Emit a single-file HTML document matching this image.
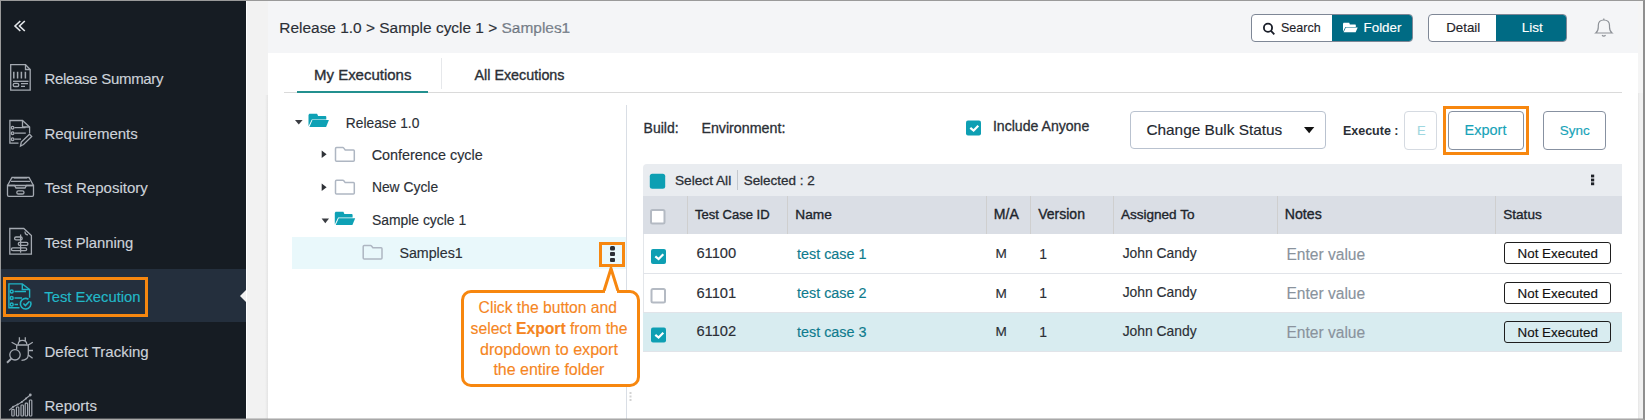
<!DOCTYPE html><html><head><meta charset="utf-8"><style>*{box-sizing:border-box;margin:0;padding:0}html,body{width:1645px;height:420px;overflow:hidden;background:#fff;font-family:"Liberation Sans", sans-serif}.t{position:absolute;white-space:nowrap}.r{position:absolute}svg{position:absolute;left:0;top:0}</style></head><body>
<div class="r" style="left:0px;top:0px;width:1645px;height:420px;background:#f2f2f2;"></div>
<div class="r" style="left:268px;top:0px;width:1370px;height:53px;background:#f4f5f7;"></div>
<div class="r" style="left:0px;top:0px;width:246px;height:420px;background:#161c23;"></div>
<div class="r" style="left:246px;top:0px;width:1px;height:420px;background:#ffffff;"></div>
<div class="r" style="left:268px;top:53px;width:1370px;height:367px;background:#ffffff;"></div>
<div class="r" style="left:265px;top:95px;width:3px;height:325px;background:linear-gradient(to right,#f2f2f2,#e4e4e4);"></div>
<div class="r" style="left:1638px;top:0px;width:6px;height:93px;background:#f5f5f5;"></div>
<div class="r" style="left:1638px;top:93px;width:6px;height:327px;background:linear-gradient(to right,#e6e6e6,#f1f1f1 2px,#f1f1f1);"></div>
<div class="r" style="left:0px;top:269px;width:246px;height:53px;background:#242f3d;"></div>
<div class="t" style="left:44.4px;top:71.20px;font-size:15px;line-height:15px;color:#cdd2d9;-webkit-text-stroke:0.15px #cdd2d9;letter-spacing:-0.3px;">Release Summary</div>
<div class="t" style="left:44.4px;top:126.40px;font-size:15px;line-height:15px;color:#cdd2d9;-webkit-text-stroke:0.15px #cdd2d9;">Requirements</div>
<div class="t" style="left:44.4px;top:180.40px;font-size:15px;line-height:15px;color:#cdd2d9;-webkit-text-stroke:0.15px #cdd2d9;">Test Repository</div>
<div class="t" style="left:44.4px;top:235.57px;font-size:14.8px;line-height:14.8px;color:#cdd2d9;-webkit-text-stroke:0.15px #cdd2d9;">Test Planning</div>
<div class="t" style="left:44.3px;top:290.47px;font-size:14.8px;line-height:14.8px;color:#22b8c8;-webkit-text-stroke:0.15px #22b8c8;">Test Execution</div>
<div class="t" style="left:44.5px;top:343.90px;font-size:15px;line-height:15px;color:#cdd2d9;-webkit-text-stroke:0.15px #cdd2d9;">Defect Tracking</div>
<div class="t" style="left:44.5px;top:397.70px;font-size:15px;line-height:15px;color:#cdd2d9;-webkit-text-stroke:0.15px #cdd2d9;">Reports</div>
<div class="r" style="left:3px;top:277px;width:145px;height:40px;background:transparent;border:3px solid #f7870f"></div>
<div class="r" style="left:240px;top:290px;width:0;height:0;border-top:6px solid transparent;border-bottom:6px solid transparent;border-right:6px solid #f2f2f2"></div>
<div class="t" style="left:279.3px;top:20.23px;font-size:15.44px;line-height:15.44px;color:#2b2f36;-webkit-text-stroke:0.15px #2b2f36;">Release 1.0 &gt; Sample cycle 1 &gt; <span style="color:#7f8893">Samples1</span></div>
<div class="r" style="left:1251px;top:14px;width:162px;height:28px;border:1px solid #7e8796;border-radius:4px;background:#fff;overflow:hidden"><div class="r" style="left:80px;top:-1px;width:82px;height:28px;background:#006b84"></div></div>
<div class="t" style="left:1281.0px;top:22.29px;font-size:12.53px;line-height:12.53px;color:#1f232a;-webkit-text-stroke:0.15px #1f232a;">Search</div>
<div class="t" style="left:1363.6px;top:21.11px;font-size:13.34px;line-height:13.34px;color:#ffffff;-webkit-text-stroke:0.15px #ffffff;">Folder</div>
<div class="r" style="left:1428px;top:14px;width:139px;height:28px;border:1px solid #7e8796;border-radius:4px;background:#fff;overflow:hidden"><div class="r" style="left:67px;top:-1px;width:72px;height:28px;background:#006b84"></div></div>
<div class="t" style="left:1446.2px;top:20.64px;font-size:13.3px;line-height:13.3px;color:#1f232a;-webkit-text-stroke:0.15px #1f232a;">Detail</div>
<div class="t" style="left:1521.8px;top:21.37px;font-size:13.5px;line-height:13.5px;color:#ffffff;-webkit-text-stroke:0.15px #ffffff;">List</div>
<div class="t" style="left:314.0px;top:67.21px;font-size:14.99px;line-height:14.99px;color:#2b2f36;-webkit-text-stroke:0.35px #2b2f36;">My Executions</div>
<div class="t" style="left:474.5px;top:67.77px;font-size:14.33px;line-height:14.33px;color:#2b2f36;-webkit-text-stroke:0.35px #2b2f36;">All Executions</div>
<div class="r" style="left:441px;top:58px;width:1px;height:31px;background:#e6e8eb;"></div>
<div class="r" style="left:284px;top:92px;width:1338px;height:1px;background:#dadada;"></div>
<div class="r" style="left:297px;top:91px;width:131px;height:2px;background:#23908f;"></div>
<div class="t" style="left:345.8px;top:116.53px;font-size:13.79px;line-height:13.79px;color:#2b2f36;-webkit-text-stroke:0.15px #2b2f36;">Release 1.0</div>
<div class="t" style="left:371.7px;top:147.83px;font-size:14.38px;line-height:14.38px;color:#2b2f36;-webkit-text-stroke:0.15px #2b2f36;">Conference cycle</div>
<div class="t" style="left:371.9px;top:181.46px;font-size:13.87px;line-height:13.87px;color:#2b2f36;-webkit-text-stroke:0.15px #2b2f36;">New Cycle</div>
<div class="t" style="left:371.9px;top:213.92px;font-size:13.92px;line-height:13.92px;color:#2b2f36;-webkit-text-stroke:0.15px #2b2f36;">Sample cycle 1</div>
<div class="r" style="left:292px;top:237px;width:334px;height:32px;background:#e9f8fb;"></div>
<div class="t" style="left:399.4px;top:245.95px;font-size:14.24px;line-height:14.24px;color:#2b2f36;-webkit-text-stroke:0.15px #2b2f36;">Samples1</div>
<div class="r" style="left:599px;top:242px;width:26px;height:25px;background:transparent;border:3px solid #f7870f"></div>
<div class="r" style="left:626px;top:105px;width:1px;height:315px;background:#d9dee5;"></div>
<div class="t" style="left:643.6px;top:121.06px;font-size:13.99px;line-height:13.99px;color:#2b2f36;-webkit-text-stroke:0.3px #2b2f36;">Build:</div>
<div class="t" style="left:701.4px;top:120.83px;font-size:14.26px;line-height:14.26px;color:#2b2f36;-webkit-text-stroke:0.3px #2b2f36;">Environment:</div>
<div class="t" style="left:992.9px;top:118.76px;font-size:14.1px;line-height:14.1px;color:#2b2f36;-webkit-text-stroke:0.3px #2b2f36;">Include Anyone</div>
<div class="r" style="left:1130px;top:111px;width:196px;height:38px;border:1px solid #b9c2cf;border-radius:4px;background:#fff"></div>
<div class="t" style="left:1146.4px;top:122.37px;font-size:15.39px;line-height:15.39px;color:#24282f;-webkit-text-stroke:0.15px #24282f;">Change Bulk Status</div>
<div class="t" style="left:1342.9px;top:124.79px;font-size:12.53px;line-height:12.53px;color:#2b2f36;font-weight:bold;">Execute :</div>
<div class="r" style="left:1404px;top:111px;width:33px;height:39px;border:1px solid #d5dae1;border-radius:4px;background:#fff"></div>
<div class="t" style="left:1417.0px;top:124.40px;font-size:13px;line-height:13px;color:#9fd7e0;-webkit-text-stroke:0.15px #9fd7e0;">E</div>
<div class="r" style="left:1448px;top:111px;width:76px;height:39px;border:1px solid #8791a1;border-radius:4px;background:#fff"></div>
<div class="t" style="left:1464.5px;top:123.10px;font-size:14.53px;line-height:14.53px;color:#17a3b8;-webkit-text-stroke:0.15px #17a3b8;">Export</div>
<div class="r" style="left:1443px;top:106px;width:86px;height:49px;background:transparent;border:3px solid #f7870f"></div>
<div class="r" style="left:1543px;top:111px;width:63px;height:39px;border:1px solid #8791a1;border-radius:4px;background:#fff"></div>
<div class="t" style="left:1559.7px;top:123.98px;font-size:13.49px;line-height:13.49px;color:#17a3b8;-webkit-text-stroke:0.15px #17a3b8;">Sync</div>
<div class="r" style="left:643px;top:164px;width:979px;height:32px;background:#e9ecf0;border-radius:4px 0 0 0"></div>
<div class="t" style="left:674.9px;top:173.81px;font-size:13.69px;line-height:13.69px;color:#2b2f36;-webkit-text-stroke:0.3px #2b2f36;">Select All</div>
<div class="r" style="left:737px;top:170px;width:1px;height:20px;background:#c4c8ce;"></div>
<div class="t" style="left:743.7px;top:174.02px;font-size:13.44px;line-height:13.44px;color:#2b2f36;-webkit-text-stroke:0.3px #2b2f36;">Selected : 2</div>
<div class="r" style="left:643px;top:196px;width:979px;height:38px;background:#dadee5;"></div>
<div class="r" style="left:687px;top:196px;width:1px;height:38px;background:#cfcfcf;"></div>
<div class="r" style="left:787px;top:196px;width:1px;height:38px;background:#cfcfcf;"></div>
<div class="r" style="left:986px;top:196px;width:1px;height:38px;background:#cfcfcf;"></div>
<div class="r" style="left:1030px;top:196px;width:1px;height:38px;background:#cfcfcf;"></div>
<div class="r" style="left:1113px;top:196px;width:1px;height:38px;background:#cfcfcf;"></div>
<div class="r" style="left:1277px;top:196px;width:1px;height:38px;background:#cfcfcf;"></div>
<div class="r" style="left:1495px;top:196px;width:1px;height:38px;background:#cfcfcf;"></div>
<div class="t" style="left:695.1px;top:208.28px;font-size:13.02px;line-height:13.02px;color:#20252c;-webkit-text-stroke:0.35px #20252c;">Test Case ID</div>
<div class="t" style="left:795.3px;top:207.72px;font-size:13.68px;line-height:13.68px;color:#20252c;-webkit-text-stroke:0.35px #20252c;">Name</div>
<div class="t" style="left:993.8px;top:207.40px;font-size:14.06px;line-height:14.06px;color:#20252c;-webkit-text-stroke:0.35px #20252c;">M/A</div>
<div class="t" style="left:1038.2px;top:207.42px;font-size:14.03px;line-height:14.03px;color:#20252c;-webkit-text-stroke:0.35px #20252c;">Version</div>
<div class="t" style="left:1120.9px;top:207.82px;font-size:13.56px;line-height:13.56px;color:#20252c;-webkit-text-stroke:0.35px #20252c;">Assigned To</div>
<div class="t" style="left:1284.8px;top:207.34px;font-size:14.13px;line-height:14.13px;color:#20252c;-webkit-text-stroke:0.35px #20252c;">Notes</div>
<div class="t" style="left:1503.2px;top:207.77px;font-size:13.62px;line-height:13.62px;color:#20252c;-webkit-text-stroke:0.35px #20252c;">Status</div>
<div class="r" style="left:643px;top:234px;width:1px;height:118px;background:#e3e6ea;"></div>
<div class="r" style="left:643px;top:273px;width:979px;height:1px;background:#e1e4e9;"></div>
<div class="r" style="left:643px;top:312px;width:979px;height:40px;background:#d8ecf0;border-top:1px solid #e1e4e9;border-bottom:1px solid #e1e4e9"></div>
<div class="t" style="left:696.4px;top:246.35px;font-size:14.71px;line-height:14.71px;color:#2b2f36;-webkit-text-stroke:0.15px #2b2f36;">61100</div>
<div class="t" style="left:797.0px;top:246.62px;font-size:14.39px;line-height:14.39px;color:#0e7b8d;-webkit-text-stroke:0.15px #0e7b8d;">test case 1</div>
<div class="t" style="left:995.5px;top:247.29px;font-size:13.6px;line-height:13.6px;color:#2b2f36;-webkit-text-stroke:0.15px #2b2f36;">M</div>
<div class="t" style="left:1039.2px;top:246.95px;font-size:14px;line-height:14px;color:#2b2f36;-webkit-text-stroke:0.15px #2b2f36;">1</div>
<div class="t" style="left:1122.7px;top:247.06px;font-size:13.87px;line-height:13.87px;color:#2b2f36;-webkit-text-stroke:0.15px #2b2f36;">John Candy</div>
<div class="t" style="left:1286.4px;top:246.91px;font-size:15.58px;line-height:15.58px;color:#8a939d;-webkit-text-stroke:0.15px #8a939d;">Enter value</div>
<div class="r" style="left:1504px;top:242px;width:107px;height:22px;border:1.5px solid #1e1e1e;border-radius:3px;background:transparent"></div>
<div class="t" style="left:1517.6px;top:247.47px;font-size:13.39px;line-height:13.39px;color:#111;-webkit-text-stroke:0.15px #111;">Not Executed</div>
<div class="t" style="left:696.4px;top:285.65px;font-size:14.71px;line-height:14.71px;color:#2b2f36;-webkit-text-stroke:0.15px #2b2f36;">61101</div>
<div class="t" style="left:797.0px;top:285.92px;font-size:14.39px;line-height:14.39px;color:#0e7b8d;-webkit-text-stroke:0.15px #0e7b8d;">test case 2</div>
<div class="t" style="left:995.5px;top:286.59px;font-size:13.6px;line-height:13.6px;color:#2b2f36;-webkit-text-stroke:0.15px #2b2f36;">M</div>
<div class="t" style="left:1039.2px;top:286.25px;font-size:14px;line-height:14px;color:#2b2f36;-webkit-text-stroke:0.15px #2b2f36;">1</div>
<div class="t" style="left:1122.7px;top:286.36px;font-size:13.87px;line-height:13.87px;color:#2b2f36;-webkit-text-stroke:0.15px #2b2f36;">John Candy</div>
<div class="t" style="left:1286.4px;top:286.21px;font-size:15.58px;line-height:15.58px;color:#8a939d;-webkit-text-stroke:0.15px #8a939d;">Enter value</div>
<div class="r" style="left:1504px;top:282px;width:107px;height:22px;border:1.5px solid #1e1e1e;border-radius:3px;background:transparent"></div>
<div class="t" style="left:1517.6px;top:286.77px;font-size:13.39px;line-height:13.39px;color:#111;-webkit-text-stroke:0.15px #111;">Not Executed</div>
<div class="t" style="left:696.4px;top:324.45px;font-size:14.71px;line-height:14.71px;color:#2b2f36;-webkit-text-stroke:0.15px #2b2f36;">61102</div>
<div class="t" style="left:797.0px;top:324.72px;font-size:14.39px;line-height:14.39px;color:#0e7b8d;-webkit-text-stroke:0.15px #0e7b8d;">test case 3</div>
<div class="t" style="left:995.5px;top:325.39px;font-size:13.6px;line-height:13.6px;color:#2b2f36;-webkit-text-stroke:0.15px #2b2f36;">M</div>
<div class="t" style="left:1039.2px;top:325.05px;font-size:14px;line-height:14px;color:#2b2f36;-webkit-text-stroke:0.15px #2b2f36;">1</div>
<div class="t" style="left:1122.7px;top:325.16px;font-size:13.87px;line-height:13.87px;color:#2b2f36;-webkit-text-stroke:0.15px #2b2f36;">John Candy</div>
<div class="t" style="left:1286.4px;top:325.01px;font-size:15.58px;line-height:15.58px;color:#8a939d;-webkit-text-stroke:0.15px #8a939d;">Enter value</div>
<div class="r" style="left:1504px;top:321px;width:107px;height:22px;border:1.5px solid #1e1e1e;border-radius:3px;background:transparent"></div>
<div class="t" style="left:1517.6px;top:325.57px;font-size:13.39px;line-height:13.39px;color:#111;-webkit-text-stroke:0.15px #111;">Not Executed</div>
<div class="r" style="left:461px;top:290px;width:179px;height:97px;border:3px solid #f7870f;border-radius:10px;background:#fff"></div>
<div class="t" style="left:478.6px;top:299.64px;font-size:15.67px;line-height:15.67px;color:#f5861f;-webkit-text-stroke:0.15px #f5861f;">Click the button and</div>
<div class="t" style="left:470.6px;top:321.01px;font-size:15.7px;line-height:15.7px;color:#f5861f;-webkit-text-stroke:0.15px #f5861f;">select <b>Export</b> from the</div>
<div class="t" style="left:480.0px;top:341.25px;font-size:16.12px;line-height:16.12px;color:#f5861f;-webkit-text-stroke:0.15px #f5861f;">dropdown to export</div>
<div class="t" style="left:493.4px;top:362.17px;font-size:15.98px;line-height:15.98px;color:#f5861f;-webkit-text-stroke:0.15px #f5861f;">the entire folder</div>
<svg width="1645" height="420" viewBox="0 0 1645 420"><path d="M20.3 21 L15 26 L20.3 31 M24.8 21 L19.5 26 L24.8 31" fill="none" stroke="#e4e7eb" stroke-width="1.6"/><g fill="none" stroke="#a4a9b1" stroke-width="1.3"><path d="M10.7 64.7 H25.5 L30.2 69.5 V90.2 H10.7 Z"/><path d="M25.5 64.7 V69.5 H30.2"/><path d="M13.8 71.8 V78.4 M17.6 71.8 V78.4 M21.4 71.8 V78.4 M25.4 71.8 V78.4" stroke-width="1.5"/><path d="M13 81.3 H28.5"/><rect x="13.2" y="83.3" width="5.6" height="3.2" rx="1.6"/><path d="M21 83.6 H28 M21 86.3 H25"/></g><g fill="none" stroke="#a4a9b1" stroke-width="1.3"><path d="M29.6 133.3 V127 L22.5 120.5 H9.9 V143.2 H18.5"/><path d="M22.5 120.5 V127 H29.6"/><circle cx="12.6" cy="127.7" r="1.3"/><circle cx="12.6" cy="133.2" r="1.3"/><circle cx="12.6" cy="139.2" r="1.3"/><path d="M14.5 127.7 H25.5 M14.5 133.2 H25.8 M14.5 139.2 H21"/><path d="M20.5 146 L21.3 142 L29.5 134.2 L31.7 136.4 L23.5 144.5 Z"/></g><g fill="none" stroke="#a4a9b1" stroke-width="1.3"><path d="M7.5 185.5 V195 Q7.5 196.3 8.8 196.3 H32.2 Q33.5 196.3 33.5 195 V185.5 Z"/><path d="M7.5 185.5 L12 177.5 H29 L33.5 185.5"/><path d="M11 181.3 H30 M14 177.8 H27"/><path d="M7.5 185.5 H14.5 L16 188 H25 L26.5 185.5 H33.5"/><rect x="16.8" y="190.8" width="7.2" height="3.2" rx="1.6"/></g><g fill="none" stroke="#a4a9b1" stroke-width="1.3"><path d="M9.8 228.5 H23.8 L31.4 235.5 V254.2 H9.8 Z"/><path d="M25 231.5 Q25 234.8 28 234.8"/><path d="M20.6 234.5 V252.7"/><rect x="14.6" y="237" width="7.6" height="2.9" rx="1.4"/><rect x="18.3" y="242.4" width="9.6" height="2.9" rx="1.4"/><rect x="11.4" y="247.8" width="15.3" height="2.9" rx="1.4"/></g><g fill="none" stroke="#1fb4c4" stroke-width="1.4"><path d="M29.6 297.8 V289.5 L22.3 283.9 H8.9 V307.8 H19.5"/><path d="M22.3 283.9 V289.5 H29.6"/><circle cx="11.7" cy="291.5" r="1.5"/><circle cx="11.7" cy="298" r="1.5"/><circle cx="11.7" cy="304.5" r="1.5"/><path d="M14.5 291.5 H26 M14.5 298 H22 M14.5 304.5 H18"/><path d="M30.5 301.5 A5.3 5.3 0 1 1 28.5 299.2" stroke-width="1.6"/><path d="M23.4 303.5 L25.4 305.5 L29.5 301.2" stroke-width="1.6"/></g><g fill="none" stroke="#a4a9b1" stroke-width="1.3"><path d="M19.4 337.3 V341 M25.3 337.3 V341"/><path d="M18.2 344.5 Q18.2 340.3 22.4 340.3 Q26.8 340.3 26.8 344.5"/><path d="M16.7 345 H28.3 V354.5 Q28.3 360.2 21.5 360.4"/><path d="M16.7 345 V349.5"/><path d="M11.6 342.3 L16.7 345 M28.3 345 L32.8 342.3 M28.3 350.5 H33 M28.3 355 L32.6 358.3"/><circle cx="15" cy="354.8" r="5.2"/><path d="M11.3 358.6 L7 362.8" stroke-width="2"/></g><g fill="none" stroke="#a4a9b1" stroke-width="1.2"><rect x="11.8" y="409.3" width="2.4" height="6.7" rx="0.8"/><rect x="16.4" y="407" width="2.4" height="9" rx="0.8"/><rect x="21" y="405" width="2.4" height="11" rx="0.8"/><rect x="25.2" y="403.1" width="2.4" height="12.9" rx="0.8"/><rect x="29.4" y="400" width="2.4" height="16" rx="0.8"/><path d="M9 410.3 L13.2 406.8 L17.6 404.6 L21.8 402 L26 398.5 L30.3 395" stroke-width="1.1"/></g><g fill="#a4a9b1"><circle cx="13.2" cy="406.8" r="1"/><circle cx="17.6" cy="404.6" r="1"/><circle cx="21.8" cy="402" r="1"/><circle cx="26" cy="398.5" r="1"/><circle cx="30.3" cy="395" r="1.4"/></g><g fill="none" stroke="#191d28" stroke-width="1.8"><circle cx="1268" cy="27.8" r="4.1"/><path d="M1271 30.9 L1274.3 34.3"/></g><path d="M1343.00 23.66 L1343.58 22.80 L1349.19 22.80 L1349.91 24.46 L1355.38 24.46 L1355.82 24.96 L1355.82 26.90 L1345.38 26.90 L1343.00 31.87 Z" fill="#ffffff"/><path d="M1345.81 27.41 L1357.69 27.41 L1355.67 32.30 L1343.65 32.30 Z" fill="#ffffff"/><path d="M295 120 H302.6 L298.8 124.6 Z" fill="#3a3d42"/><path d="M321.7 150.6 L326.6 154.3 L321.7 158 Z" fill="#2f3237"/><path d="M321.7 183.6 L326.6 187.3 L321.7 191 Z" fill="#2f3237"/><path d="M321.6 218.6 H329 L325.3 223.3 Z" fill="#3a3d42"/><path d="M308.50 114.90 L309.30 113.70 L317.10 113.70 L318.10 116.00 L325.70 116.00 L326.30 116.70 L326.30 119.40 L311.80 119.40 L308.50 126.30 Z" fill="#0ea1b5"/><path d="M312.40 120.10 L328.90 120.10 L326.10 126.90 L309.40 126.90 Z" fill="#0ea1b5"/><path d="M334.80 213.00 L335.60 211.80 L343.40 211.80 L344.40 214.10 L352.00 214.10 L352.60 214.80 L352.60 217.50 L338.10 217.50 L334.80 224.40 Z" fill="#0ea1b5"/><path d="M338.70 218.20 L355.20 218.20 L352.40 225.00 L335.70 225.00 Z" fill="#0ea1b5"/><path d="M335.5 148.70000000000002 Q335.5 147.6 336.6 147.6 H342.8 Q343.40000000000003 147.6 343.8 148.1 L345.2 149.9 H353.40000000000003 Q354.3 149.9 354.3 150.9 V160.20000000000002 Q354.3 161.20000000000002 353.3 161.20000000000002 H336.6 Q335.5 161.20000000000002 335.5 160.20000000000002 Z" fill="none" stroke="#aeb6c2" stroke-width="1.5"/><path d="M335.5 181.4 Q335.5 180.29999999999998 336.6 180.29999999999998 H342.8 Q343.40000000000003 180.29999999999998 343.8 180.79999999999998 L345.2 182.6 H353.40000000000003 Q354.3 182.6 354.3 183.6 V192.9 Q354.3 193.9 353.3 193.9 H336.6 Q335.5 193.9 335.5 192.9 Z" fill="none" stroke="#aeb6c2" stroke-width="1.5"/><path d="M363.2 246.60000000000002 Q363.2 245.5 364.3 245.5 H370.5 Q371.1 245.5 371.5 246.0 L372.9 247.8 H381.1 Q382.0 247.8 382.0 248.8 V258.1 Q382.0 259.1 381.0 259.1 H364.3 Q363.2 259.1 363.2 258.1 Z" fill="none" stroke="#aeb6c2" stroke-width="1.5"/><g fill="#2b2f36"><rect x="610" y="246" width="5" height="4.5" rx="1.5"/><rect x="610" y="252" width="5" height="4" rx="1"/><rect x="610" y="258" width="5" height="4" rx="1"/></g><path d="M603.5 292.5 L611 268.5 L618.5 292.5" fill="#fff" stroke="#f7870f" stroke-width="3" stroke-linejoin="miter"/><rect x="605" y="291" width="12" height="4" fill="#fff"/><rect x="966" y="120.5" width="15" height="15" rx="2" fill="#0e9fb3"/><path d="M970.3 127.8 L973.6 130.6 L978.3 125.8" fill="none" stroke="#fff" stroke-width="2.2"/><path d="M1304 127 H1314.3 L1309.15 133.2 Z" fill="#111"/><rect x="649.8" y="173.8" width="15.4" height="15" rx="2.5" fill="#0d9fb3"/><g fill="#1e2228"><rect x="1591" y="174.6" width="3.2" height="2.8"/><rect x="1591" y="178.6" width="3.2" height="2.8"/><rect x="1591" y="182.4" width="3.2" height="2.8"/></g><rect x="651" y="210" width="13.5" height="13.5" rx="1.5" fill="#fff" stroke="#b4bac3" stroke-width="2"/><rect x="651" y="249" width="15" height="15" rx="2" fill="#0e9fb3"/><path d="M655.3 256.3 L658.6 259.1 L663.3 254.3" fill="none" stroke="#fff" stroke-width="2.2"/><rect x="651.5" y="289" width="13.5" height="13.5" rx="1.5" fill="#fff" stroke="#b4bac3" stroke-width="2"/><rect x="651" y="327.5" width="15" height="15" rx="2" fill="#0e9fb3"/><path d="M655.3 334.8 L658.6 337.6 L663.3 332.8" fill="none" stroke="#fff" stroke-width="2.2"/><g fill="none" stroke="#8d9197" stroke-width="1.2"><path d="M1595.8 33 Q1598.3 31 1598.3 27 V25.5 Q1598.3 20 1603.8 20 Q1609.5 20 1609.5 25.5 V27 Q1609.5 31 1612 33 Z"/><path d="M1603.8 18.6 V20"/><path d="M1602 35.3 Q1603.8 37 1605.6 35.3"/></g><g fill="#d3d3d3"><rect x="629.5" y="392" width="2" height="2"/><rect x="629.5" y="395.5" width="2" height="2"/><rect x="629.5" y="399" width="2" height="2"/></g></svg>
<div class="r" style="left:0;top:0;width:1645px;height:420px;border-top:1px solid #9a9a9a;border-left:1px solid #9a9a9a;border-right:2px solid #8f8f8f;border-bottom:1px solid #a8a8a8"></div>
<div class="r" style="left:0px;top:418px;width:1645px;height:1px;background:rgba(150,150,150,0.45);"></div>
</body></html>
